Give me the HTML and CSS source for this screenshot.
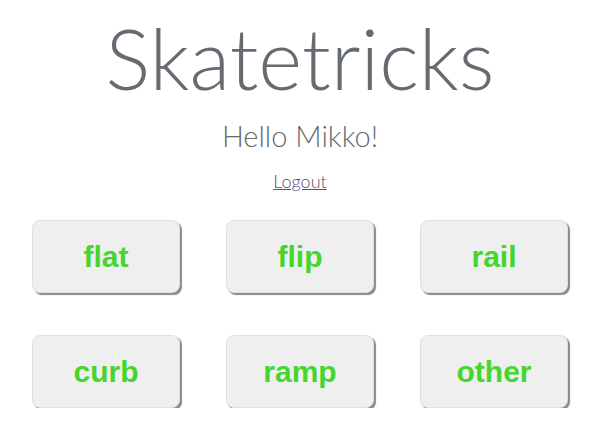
FILE: index.html
```html
<!DOCTYPE html>
<html>
<head>
<meta charset="utf-8">
<link rel="stylesheet" href="styles.css">
</head>
<body>
<div class="page">
  <h1 class="title">Skatetricks</h1>
  <p class="greeting">Hello Mikko!</p>
  <a class="logout" href="#">Logout</a>
  <div class="grid">
    <button class="trick">flat</button>
    <button class="trick">flip</button>
    <button class="trick">rail</button>
    <button class="trick">curb</button>
    <button class="trick">ramp</button>
    <button class="trick">other</button>
  </div>
</div>
</body>
</html>
```
FILE: styles.css
```css
html, body {
  margin: 0;
  padding: 0;
  background: #fff;
}
.page {
  display: flex;
  flex-direction: column;
  align-items: center;
  font-family: Lato, "Open Sans", sans-serif;
  color: #656b70;
}
.title {
  margin: 8px 0 0;
  font-size: 84px;
  font-weight: 300;
  line-height: 100px;
}
.greeting {
  margin: 10px 0 0;
  font-size: 29px;
  font-weight: 300;
  line-height: 36px;
}
.logout {
  margin-top: 16px;
  font-size: 18px;
  font-weight: 300;
  color: #5a4a7a;
  text-decoration: underline;
}
.grid {
  margin-top: 28px;
  display: grid;
  grid-template-columns: repeat(3, 148px);
  column-gap: 46px;
  row-gap: 42px;
}
.trick {
  height: 73px;
  background: #efefef;
  border: 1px solid #e0e0e0;
  border-radius: 8px;
  box-shadow: 2px 2px 1px #8a8a8a;
  font-family: "Liberation Sans", Arial, sans-serif;
  font-weight: bold;
  font-size: 30px;
  color: #44d62c;
  padding: 0;
}
```
